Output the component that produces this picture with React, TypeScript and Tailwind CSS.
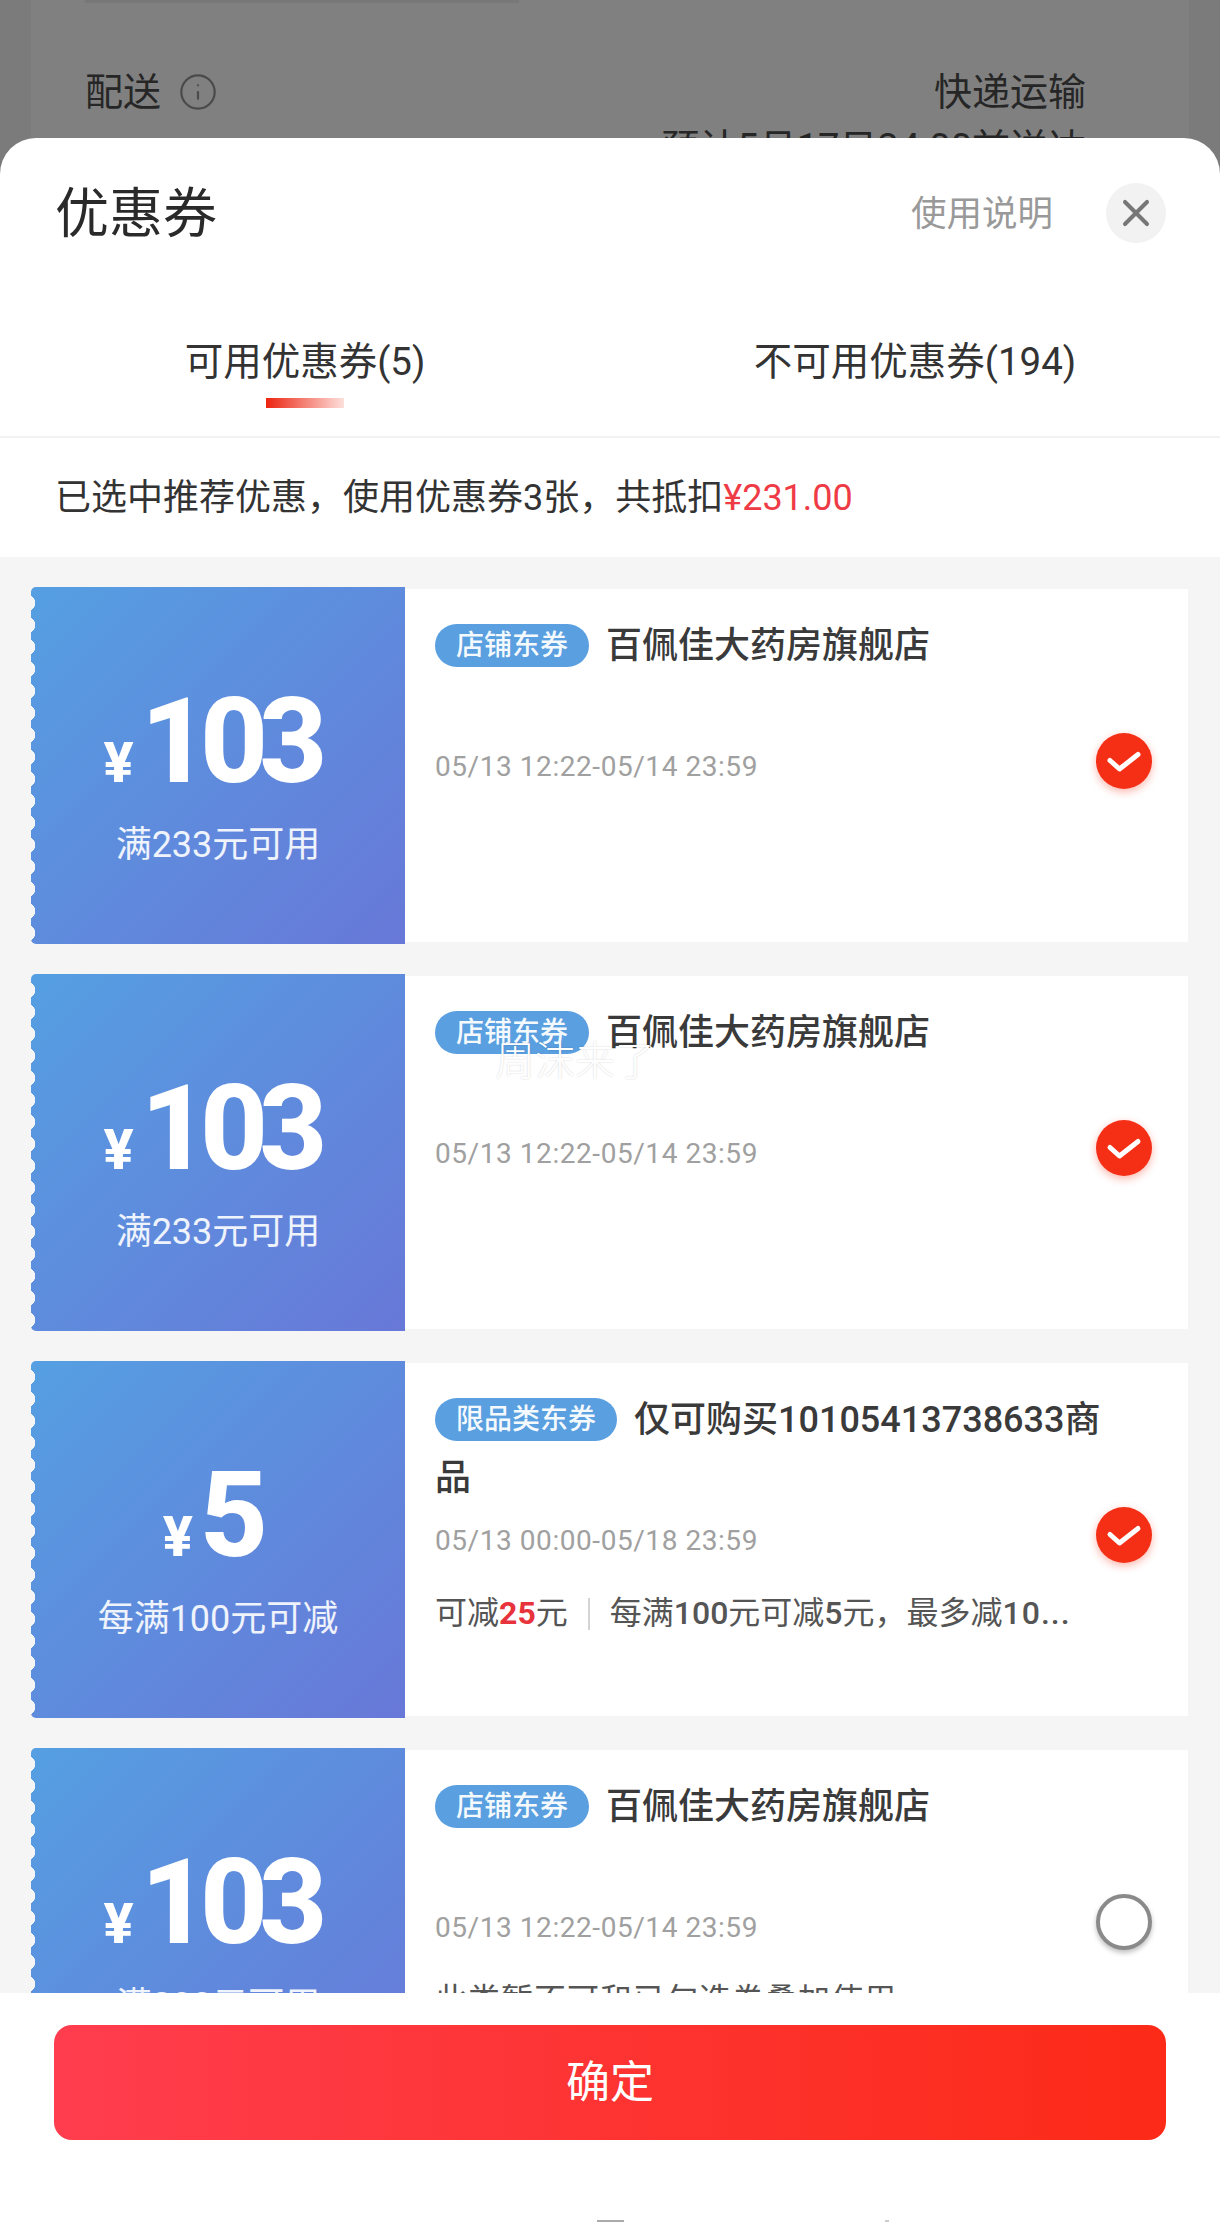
import React from "react";
import { Info, X } from "lucide-react";

type Coupon = {
  amount: string;
  rule: string;
  tag: string;
  title: string;
  date: string;
  checked: boolean;
  note?: React.ReactNode;
};

const coupons: Coupon[] = [
  { amount: "103", rule: "满233元可用", tag: "店铺东券", title: "百佩佳大药房旗舰店", date: "05/13 12:22-05/14 23:59", checked: true },
  { amount: "103", rule: "满233元可用", tag: "店铺东券", title: "百佩佳大药房旗舰店", date: "05/13 12:22-05/14 23:59", checked: true },
  {
    amount: "5",
    rule: "每满100元可减",
    tag: "限品类东券",
    title: "仅可购买10105413738633商品",
    date: "05/13 00:00-05/18 23:59",
    checked: true,
    note: (
      <>
        <span>可减</span>
        <span className="font-bold text-[#e8323c]">25</span>
        <span>元</span>
        <span className="mx-[20px] inline-block h-[32px] w-[2px] align-[-6px] bg-[#d4d4d4]" />
        <span>每满</span>
        <span className="font-medium">100</span>
        <span>元可减</span>
        <span className="font-medium">5</span>
        <span>元，最多减</span>
        <span className="font-medium tracking-[1px]">10...</span>
      </>
    ),
  },
  {
    amount: "103",
    rule: "满233元可用",
    tag: "店铺东券",
    title: "百佩佳大药房旗舰店",
    date: "05/13 12:22-05/14 23:59",
    checked: false,
    note: <span className="tracking-[1px]">此类暂不可和已勾选券叠加使用</span>,
  },
];

function CheckMark({ checked }: { checked: boolean }) {
  if (!checked) {
    return <div className="h-[56px] w-[56px] rounded-full border-[4px] border-[#8a8a8a] bg-white shadow-[0_3px_5px_rgba(0,0,0,0.25)]" />;
  }
  return (
    <div className="h-[56px] w-[56px] rounded-full bg-[#f42f15] shadow-[0_3px_8px_rgba(244,47,21,0.35)]">
      <svg viewBox="0 0 56 56" className="h-full w-full" fill="none">
        <path d="M14 27.5 L23.5 36 L42 21.5" stroke="#fff" strokeWidth="5" strokeLinecap="round" strokeLinejoin="round" />
      </svg>
    </div>
  );
}

function CouponCard({ coupon }: { coupon: Coupon }) {
  return (
    <div className="flex h-[357px] shrink-0">
      <div className="relative flex w-[374px] shrink-0 flex-col items-center rounded-l-[5px] bg-[linear-gradient(135deg,#559fe2,#6878d8)] text-white">
        <div className="absolute inset-y-0 left-0 w-[5px] bg-[radial-gradient(circle_at_-4px_50%,#f5f5f5_8px,transparent_8.5px)] bg-[length:5px_22px] bg-[position:0_5px]" />
        <div className="mt-[95px] flex h-[120px] items-end pr-[14px]">
          <span className="mb-[11px] mr-[7px] text-[56px] font-extrabold leading-none">¥</span>
          <span className="text-[118px] font-extrabold leading-[120px] tracking-[-0.075em]">{coupon.amount}</span>
        </div>
        <div className="mt-[18px] text-[36px] leading-[50px] text-white/90">{coupon.rule}</div>
      </div>
      <div className="my-[2px] flex min-w-0 flex-1 bg-white">
        <div className="min-w-0 flex-1 pl-[30px]">
          <div className="mt-[28px] h-[116px] w-[670px] text-[36px] font-medium leading-[58px] text-[#3a3a3a]">
            <span className="mr-[17px] inline-block h-[43px] rounded-full bg-[#5a9fe0] px-[21px] align-[3px] text-[28px] font-medium leading-[43px] text-white/95">
              {coupon.tag}
            </span>
            {coupon.title}
          </div>
          <div className="mt-[14px] text-[28px] leading-[40px] tracking-[0.02em] text-[#a0a0a0]">{coupon.date}</div>
          {coupon.note && <div className="mt-[32px] w-[640px] truncate text-[32px] leading-[40px] text-[#555]">{coupon.note}</div>}
        </div>
        <div className="mr-[36px] mt-[144px] shrink-0">
          <CheckMark checked={coupon.checked} />
        </div>
      </div>
    </div>
  );
}

export default function App() {
  return (
    <div className="relative h-[2222px] w-[1220px] overflow-hidden bg-[#7b7b7b] font-['Roboto','Noto_Sans_CJK_SC',sans-serif]">
      {/* page behind the sheet */}
      <div className="mx-[31px] h-[200px] bg-[#808080] pl-[54px] pr-[103px] text-[38px] leading-[50px] text-[#262626]">
        <div className="h-[3px] w-[434px] bg-[#787878]" />
        <div className="flex items-start justify-between pt-[64px]">
          <div className="flex items-center gap-[17px]">
            <span>配送</span>
            <Info size={40} strokeWidth={1.3} className="text-[#4a4a4a]" />
          </div>
          <div className="text-right">
            <div>快递运输</div>
            <div className="mt-[6px]">预计5月17日24:00前送达</div>
          </div>
        </div>
      </div>

      {/* coupon sheet */}
      <div className="absolute inset-x-0 bottom-0 top-[138px] flex flex-col overflow-hidden rounded-t-[36px] bg-white">
        <div className="flex h-[150px] shrink-0 items-center pl-[55px] pr-[54px]">
          <div className="flex-1 pt-[4px] text-[54px] leading-none text-[#2a2a2a]">优惠券</div>
          <div className="mr-[53px] pt-[4px] text-[35.5px] leading-none text-[#999]">使用说明</div>
          <div className="flex h-[60px] w-[60px] items-center justify-center rounded-full bg-[#f2f2f2]">
            <X size={44} strokeWidth={2.2} className="text-[#777]" />
          </div>
        </div>

        <div className="flex h-[150px] shrink-0 border-b-2 border-[#f2f2f2] text-[38.5px] leading-[50px] text-[#333]">
          <div className="flex flex-1 flex-col items-center pt-[49px]">
            <span>可用优惠券(5)</span>
            <div className="mt-[11px] h-[10px] w-[78px] bg-[linear-gradient(90deg,#ec2410,#fde0dc)]" />
          </div>
          <div className="flex flex-1 flex-col items-center pt-[49px]">
            <span>不可用优惠券(194)</span>
          </div>
        </div>

        <div className="flex h-[119px] shrink-0 items-center pl-[55px] text-[36px] text-[#333]">
          已选中推荐优惠，使用优惠券3张，共抵扣<span className="text-[#ef3b45]">¥231.00</span>
        </div>

        <div className="flex min-h-0 flex-1 flex-col gap-[30px] overflow-hidden bg-[#f5f5f5] pl-[31px] pr-[32px] pt-[30px]">
          {coupons.map((coupon, i) => (
            <CouponCard key={i} coupon={coupon} />
          ))}
        </div>

        <div className="relative h-[229px] shrink-0 bg-white px-[54px] pt-[32px]">
          <button className="h-[115px] w-full rounded-[18px] bg-[linear-gradient(90deg,#ff3d4e,#fc2a17)] text-[44px] text-white">确定</button>
          <div className="absolute bottom-0 left-[597px] h-[2px] w-[27px] bg-[#aaa]" />
          <div className="absolute bottom-0 left-[885px] h-[2px] w-[4px] bg-[#ccc]" />
        </div>
      </div>

      {/* toast over the sheet */}
      <div className="absolute left-[495px] top-[1040px] text-[40px] font-light leading-[44px] text-white [text-shadow:0_0_2px_rgba(0,0,0,0.18)]">周沫来了</div>
    </div>
  );
}
